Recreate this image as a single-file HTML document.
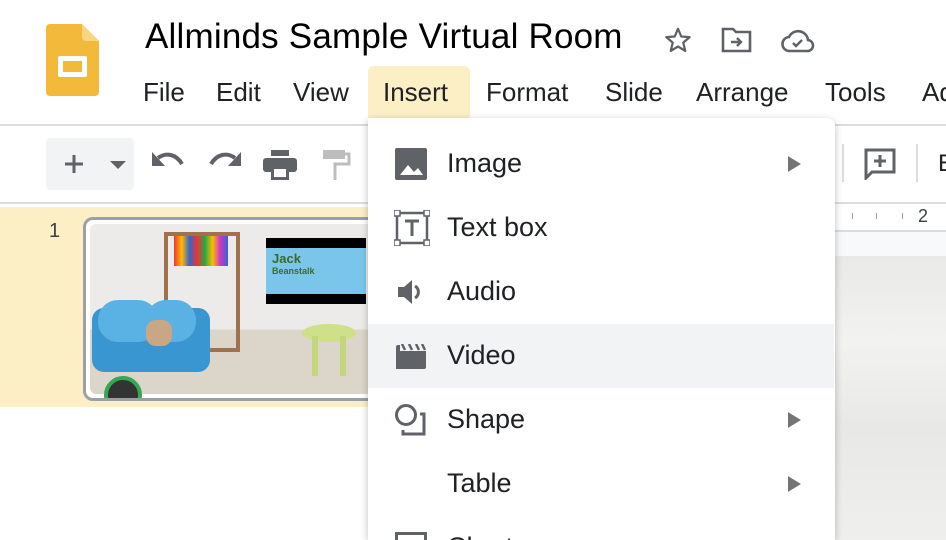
<!DOCTYPE html>
<html><head><style>
html,body{margin:0;width:946px;height:540px;overflow:hidden}
body{background:#fff;font-family:"Liberation Sans",Arial,sans-serif;position:relative;color:#202124}
.a{position:absolute}
.menu span{position:absolute;top:77px;font-size:26px;color:#202124}
.mi{position:absolute;left:0;width:466px;height:64px}
.mi .t{position:absolute;left:79px;top:16px;font-size:27px;color:#202124}
.mi .arr{position:absolute;left:420px;top:24px;width:0;height:0;border-left:13px solid #757575;border-top:8px solid transparent;border-bottom:8px solid transparent}
</style></head><body>
<svg class="a" style="left:46px;top:24px" width="53" height="72" viewBox="0 0 53 72">
<path d="M4 0H36L53 17V68a4 4 0 0 1-4 4H4a4 4 0 0 1-4-4V4a4 4 0 0 1 4-4z" fill="#f2b93b"/>
<path d="M36 0V13a4 4 0 0 0 4 4H53z" fill="#f8d57e"/>
<rect x="12" y="32" width="29" height="21" rx="2" fill="#fff"/>
<rect x="17" y="37" width="19" height="11" fill="#f2b93b"/>
</svg>
<div class="a" style="left:145px;top:17px;font-size:35px;letter-spacing:0.2px;color:#000">Allminds Sample Virtual Room</div>
<svg class="a" style="left:662px;top:25px" width="32" height="30" viewBox="0 0 24 24"><path d="M12 3l2.6 6.2 6.7.5-5.1 4.4 1.6 6.6L12 17.2 6.2 20.7l1.6-6.6L2.7 9.7l6.7-.5z" fill="none" stroke="#5f6368" stroke-width="1.8" stroke-linejoin="round"/></svg>
<svg class="a" style="left:721px;top:26px" width="32" height="28" viewBox="0 0 32 28"><path d="M2 3h10l3 3h14v19H2z" fill="none" stroke="#5f6368" stroke-width="2.6"/><path d="M10 16h10M16 12l4 4-4 4" fill="none" stroke="#5f6368" stroke-width="2.4"/></svg>
<svg class="a" style="left:781px;top:28px" width="34" height="26" viewBox="0 0 34 26"><path d="M9 23a7 7 0 0 1-1-14 10 10 0 0 1 19 3 5.5 5.5 0 0 1-1 11z" fill="none" stroke="#5f6368" stroke-width="2.6"/><path d="M12 15l3 3 6-6" fill="none" stroke="#5f6368" stroke-width="2.4"/></svg>
<div class="menu">
<div class="a" style="left:368px;top:66px;width:102px;height:58px;background:#fcefc6;border-radius:6px 6px 0 0"></div>
<span style="left:143px">File</span><span style="left:216px">Edit</span><span style="left:293px">View</span><span style="left:383px">Insert</span><span style="left:486px">Format</span><span style="left:605px">Slide</span><span style="left:696px">Arrange</span><span style="left:825px">Tools</span><span style="left:922px">Ad</span>
</div>
<div class="a" style="left:0;top:124px;width:946px;height:2px;background:#dadce0"></div>
<div class="a" style="left:46px;top:138px;width:88px;height:52px;background:#f1f3f4;border-radius:4px"></div>
<svg class="a" style="left:62px;top:152px" width="24" height="24"><path d="M12 3v18M3 12h18" stroke="#5f6368" stroke-width="3"/></svg>
<svg class="a" style="left:110px;top:161px" width="16" height="8"><path d="M0 0h16L8 8z" fill="#5f6368"/></svg>
<svg class="a" style="left:150px;top:150px" width="36" height="24" viewBox="0 0 36 24"><path d="M8 8C16 2 26 4 32 14" fill="none" stroke="#5f6368" stroke-width="4"/><path d="M2 2v14h13z" fill="#5f6368"/></svg>
<svg class="a" style="left:207px;top:150px" width="36" height="24" viewBox="0 0 36 24"><path d="M28 8C20 2 10 4 4 14" fill="none" stroke="#5f6368" stroke-width="4"/><path d="M34 2v14H21z" fill="#5f6368"/></svg>
<svg class="a" style="left:263px;top:150px" width="34" height="30" viewBox="0 0 34 30"><rect x="8" y="0" width="18" height="6" fill="#5f6368"/><rect x="0" y="8" width="34" height="14" rx="3" fill="#5f6368"/><rect x="8" y="17" width="18" height="13" fill="#5f6368"/><rect x="11" y="19" width="12" height="8" fill="#fff"/></svg>
<svg class="a" style="left:323px;top:150px" width="28" height="30"><rect x="0" y="0" width="22" height="9" fill="#bdbdbd"/><path d="M22 4h4v10H12v16" fill="none" stroke="#bdbdbd" stroke-width="3"/></svg>
<div class="a" style="left:842px;top:144px;width:2px;height:38px;background:#dadce0"></div>
<svg class="a" style="left:864px;top:148px" width="32" height="32" viewBox="0 0 32 32"><path d="M2 2h28v22H8l-6 6z" fill="none" stroke="#5f6368" stroke-width="3"/><path d="M16 7v12M10 13h12" stroke="#5f6368" stroke-width="3"/></svg>
<div class="a" style="left:916px;top:144px;width:2px;height:38px;background:#dadce0"></div>
<div class="a" style="left:938px;top:150px;font-size:24px;color:#202124">E</div>
<div class="a" style="left:0;top:202px;width:946px;height:2px;background:#dadce0"></div>
<div class="a" style="left:835px;top:204px;width:111px;height:26px;background:#fff"></div>
<div class="a" style="left:852px;top:213px;width:1px;height:6px;background:#999"></div>
<div class="a" style="left:876px;top:213px;width:1px;height:6px;background:#999"></div>
<div class="a" style="left:902px;top:213px;width:1px;height:6px;background:#999"></div>
<div class="a" style="left:918px;top:206px;font-size:18px;color:#3c4043">2</div>
<div class="a" style="left:835px;top:230px;width:111px;height:2px;background:#dadce0"></div>
<div class="a" style="left:835px;top:232px;width:111px;height:24px;background:#f8f9fa"></div>
<div class="a" style="left:835px;top:256px;width:111px;height:284px;background:linear-gradient(#e9e9e8,#f2f2f1 30%,#e8e8e7 60%,#efefee)"></div>
<div class="a" style="left:0;top:207px;width:370px;height:200px;background:#fcefc6"></div>
<div class="a" style="left:49px;top:220px;font-size:20px;color:#3c4043">1</div>
<div class="a" style="left:83px;top:217px;width:300px;height:178px;border:3px solid #9aa0a6;border-radius:10px;background:#fff;overflow:hidden">
 <div class="a" style="left:4px;top:4px;width:300px;height:170px;background:linear-gradient(#ecebe9 0 62%,#dcd6ca 62%);border-radius:6px"></div>
 <div class="a" style="left:78px;top:12px;width:76px;height:120px;border:4px solid #a0714d;box-sizing:border-box"></div>
 <div class="a" style="left:88px;top:16px;width:54px;height:30px;background:linear-gradient(90deg,#e33,#fb0,#36c,#e33,#2a4,#fb0,#c3c,#36c)"></div>
 <div class="a" style="left:180px;top:18px;width:100px;height:66px;background:#000"></div>
 <div class="a" style="left:180px;top:28px;width:100px;height:46px;background:#7ac6ea"></div>
 <div class="a" style="left:186px;top:33px;font-size:13px;font-weight:bold;color:#3a6a2a;line-height:11px">Jack<br><span style="font-size:9px">Beanstalk</span></div>
 <div class="a" style="left:6px;top:88px;width:118px;height:64px;background:#3a96d0;border-radius:12px"></div>
 <div class="a" style="left:12px;top:80px;width:60px;height:42px;background:#5ab2e4;border-radius:20px"></div>
 <div class="a" style="left:60px;top:80px;width:50px;height:42px;background:#5ab2e4;border-radius:20px"></div>
 <div class="a" style="left:60px;top:100px;width:26px;height:26px;background:#c9a785;border-radius:10px"></div>
 <div class="a" style="left:216px;top:104px;width:54px;height:18px;background:#cfe08a;border-radius:50%"></div>
 <div class="a" style="left:226px;top:116px;width:6px;height:40px;background:#c4d67c"></div>
 <div class="a" style="left:254px;top:116px;width:6px;height:40px;background:#c4d67c"></div>
 <div class="a" style="left:18px;top:156px;width:38px;height:38px;border:4px solid #34a853;border-radius:50%;background:#333;box-sizing:border-box"></div>
</div>
<div class="a" style="left:368px;top:118px;width:467px;height:422px;overflow:hidden;background:#fff;border-radius:0 8px 0 0;box-shadow:0 2px 8px rgba(0,0,0,.25)">
 <div class="mi" style="top:14px"><svg class="a" style="left:27px;top:16px" width="32" height="32"><rect width="32" height="32" rx="2" fill="#5f6368"/><path d="M5 27l8-10 6 7 4-4 5 7z" fill="#fff"/></svg><div class="t">Image</div><div class="arr"></div></div>
 <div class="mi" style="top:78px"><svg class="a" style="left:26px;top:14px" width="36" height="36"><rect x="3" y="3" width="30" height="30" fill="none" stroke="#5f6368" stroke-width="2.5"/><rect x="0" y="0" width="6" height="6" fill="#fff" stroke="#5f6368" stroke-width="1.5"/><rect x="30" y="0" width="6" height="6" fill="#fff" stroke="#5f6368" stroke-width="1.5"/><rect x="0" y="30" width="6" height="6" fill="#fff" stroke="#5f6368" stroke-width="1.5"/><rect x="30" y="30" width="6" height="6" fill="#fff" stroke="#5f6368" stroke-width="1.5"/><path d="M11 11h14M18 11v15" stroke="#5f6368" stroke-width="3"/></svg><div class="t">Text box</div></div>
 <div class="mi" style="top:142px"><svg class="a" style="left:28px;top:18px" width="28" height="28"><path d="M2 9h6l8-7v24l-8-7H2z" fill="#5f6368"/><path d="M19 8a7 7 0 0 1 0 12" fill="none" stroke="#5f6368" stroke-width="3"/></svg><div class="t">Audio</div></div>
 <div class="mi" style="top:206px;background:#f1f3f4"><svg class="a" style="left:28px;top:20px" width="30" height="26"><path d="M0 3a2 2 0 0 1 2-2h2v24H2a2 2 0 0 1-2-2z M0 7h30v16a2 2 0 0 1-2 2H0z" fill="#5f6368"/><path d="M6 0l3 6M13 0l3 6M20 0l3 6M26 0l3 6" stroke="#5f6368" stroke-width="2.5"/></svg><div class="t">Video</div></div>
 <div class="mi" style="top:270px"><svg class="a" style="left:26px;top:15px" width="34" height="34"><circle cx="12" cy="12" r="9.5" fill="none" stroke="#5f6368" stroke-width="3"/><path d="M26 11h4v20H9v-4" fill="none" stroke="#5f6368" stroke-width="3"/></svg><div class="t">Shape</div><div class="arr"></div></div>
 <div class="mi" style="top:334px"><div class="t">Table</div><div class="arr"></div></div>
 <div class="mi" style="top:398px"><svg class="a" style="left:27px;top:16px" width="32" height="32"><rect x="1.5" y="1.5" width="29" height="29" fill="none" stroke="#5f6368" stroke-width="3"/></svg><div class="t">Chart</div></div>
</div>
</body></html>
